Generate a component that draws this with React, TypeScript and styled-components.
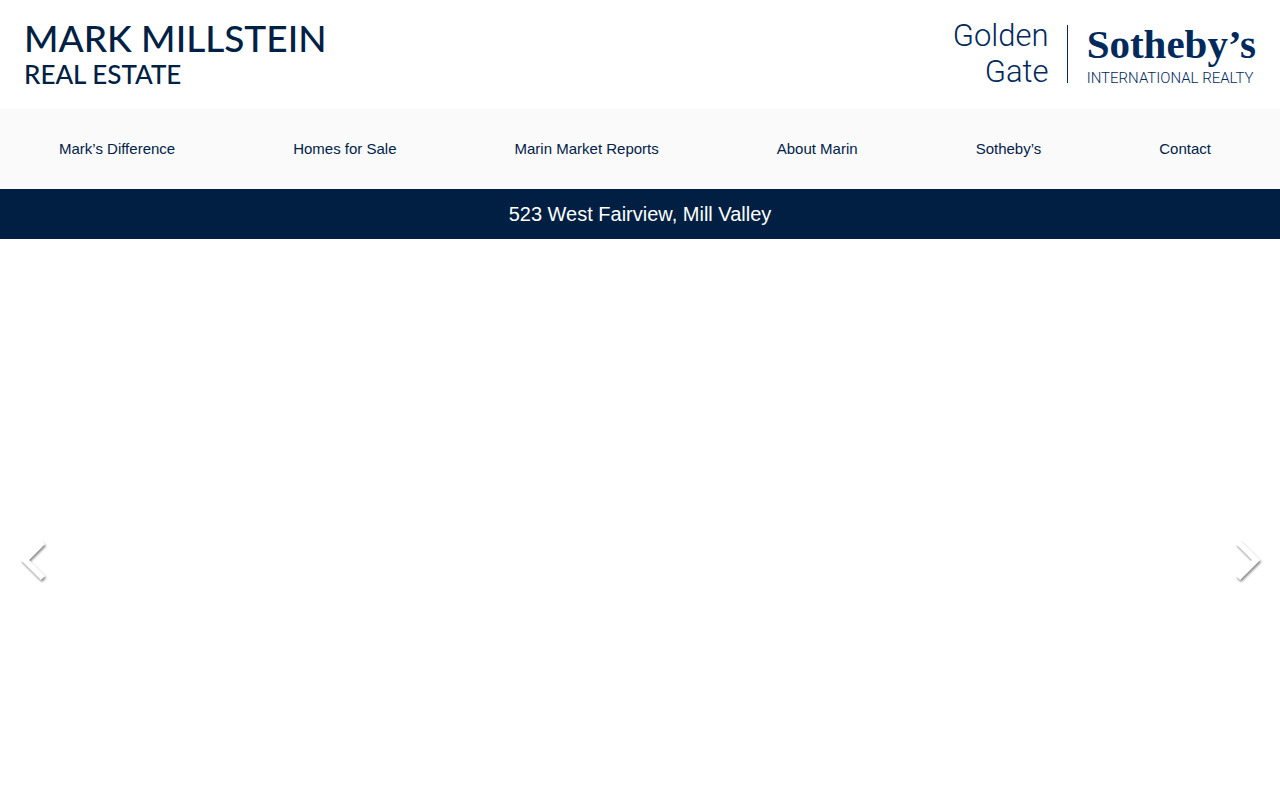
import React from "react";
import styled, { createGlobalStyle } from "styled-components";

const GlobalStyle = createGlobalStyle`
  *, *::before, *::after { box-sizing: border-box; }
  body {
    margin: 0;
    background: #fff;
    font-family: "Liberation Sans", Arial, sans-serif;
    color: #002349;
  }
`;

const Page = styled.div`
  display: flex;
  flex-direction: column;
  min-height: 100vh;
`;

const Header = styled.header`
  display: flex;
  justify-content: space-between;
  align-items: flex-start;
  padding: 16px 24px 21px;
`;

const Brand = styled.a`
  display: flex;
  flex-direction: column;
  color: #002144;
  text-decoration: none;
  font-family: Lato, sans-serif;
  font-weight: 500;
  white-space: nowrap;
`;

const BrandName = styled.span`
  font-size: 37px;
  line-height: 44px;
`;

const BrandTag = styled.span`
  font-size: 26px;
  line-height: 28px;
`;

const Affiliation = styled.a`
  display: flex;
  align-items: center;
  padding-top: 4px;
  color: #002a5c;
  text-decoration: none;
  white-space: nowrap;
`;

const Region = styled.span`
  display: flex;
  flex-direction: column;
  gap: 4px;
  padding-right: 18px;
  font-family: Roboto, sans-serif;
  font-weight: 300;
  font-size: 31px;
  line-height: 32px;
  text-align: right;
`;

const Divider = styled.span`
  width: 1px;
  height: 58px;
  background: #002a5c;
`;

const House = styled.span`
  display: flex;
  flex-direction: column;
  padding-left: 19px;
`;

const HouseName = styled.span`
  font-family: "Liberation Serif", "Times New Roman", serif;
  font-weight: 700;
  font-size: 41px;
  line-height: 48px;
`;

const HouseTag = styled.span`
  font-family: Roboto, sans-serif;
  font-weight: 300;
  font-size: 15px;
  line-height: 20px;
`;

const Nav = styled.nav`
  background: #fafafa;
`;

const NavList = styled.ul`
  display: flex;
  justify-content: space-around;
  margin: 0;
  padding: 0 10px 0 0;
  list-style: none;
`;

const NavLink = styled.a`
  display: block;
  font-size: 15px;
  line-height: 80px;
  color: #002349;
  text-decoration: none;
  white-space: nowrap;
`;

const Main = styled.main`
  display: flex;
  flex-direction: column;
  flex: 1;
`;

const Title = styled.h1`
  margin: 0;
  background: #001f42;
  color: #fff;
  font-size: 20px;
  font-weight: 400;
  line-height: 50px;
  text-align: center;
`;

const Slider = styled.section`
  display: flex;
  flex: 1;
  align-items: flex-start;
  justify-content: space-between;
  padding: calc(25vw - 24px) 12px 24px;
`;

const ArrowButton = styled.button`
  display: block;
  padding: 0;
  border: 0;
  background: none;
  cursor: pointer;

  svg {
    display: block;
    overflow: visible;
    filter: drop-shadow(1px 2px 1px rgba(0, 0, 0, 0.45));
  }
`;

const links = [
  "Mark’s Difference",
  "Homes for Sale",
  "Marin Market Reports",
  "About Marin",
  "Sotheby’s",
  "Contact",
];

function Arrow({ label, points }: { label: string; points: string }) {
  return (
    <ArrowButton type="button" aria-label={label}>
      <svg width="40" height="48" viewBox="0 0 40 48" fill="none" stroke="#fff" strokeWidth="6">
        <polyline points={points} />
      </svg>
    </ArrowButton>
  );
}

export default function App() {
  return (
    <Page>
      <GlobalStyle />
      <Header>
        <Brand href="#home">
          <BrandName>MARK MILLSTEIN</BrandName>
          <BrandTag>REAL ESTATE</BrandTag>
        </Brand>
        <Affiliation href="#sothebys">
          <Region>
            <span>Golden</span>
            <span>Gate</span>
          </Region>
          <Divider />
          <House>
            <HouseName>Sotheby’s</HouseName>
            <HouseTag>INTERNATIONAL REALTY</HouseTag>
          </House>
        </Affiliation>
      </Header>
      <Nav>
        <NavList>
          {links.map((text) => (
            <li key={text}>
              <NavLink href="#">{text}</NavLink>
            </li>
          ))}
        </NavList>
      </Nav>
      <Main>
        <Title>523 West Fairview, Mill Valley</Title>
        <Slider>
          <Arrow label="Previous slide" points="31,7 13,25 31,43" />
          <Arrow label="Next slide" points="10,7 28,25 10,43" />
        </Slider>
      </Main>
    </Page>
  );
}
